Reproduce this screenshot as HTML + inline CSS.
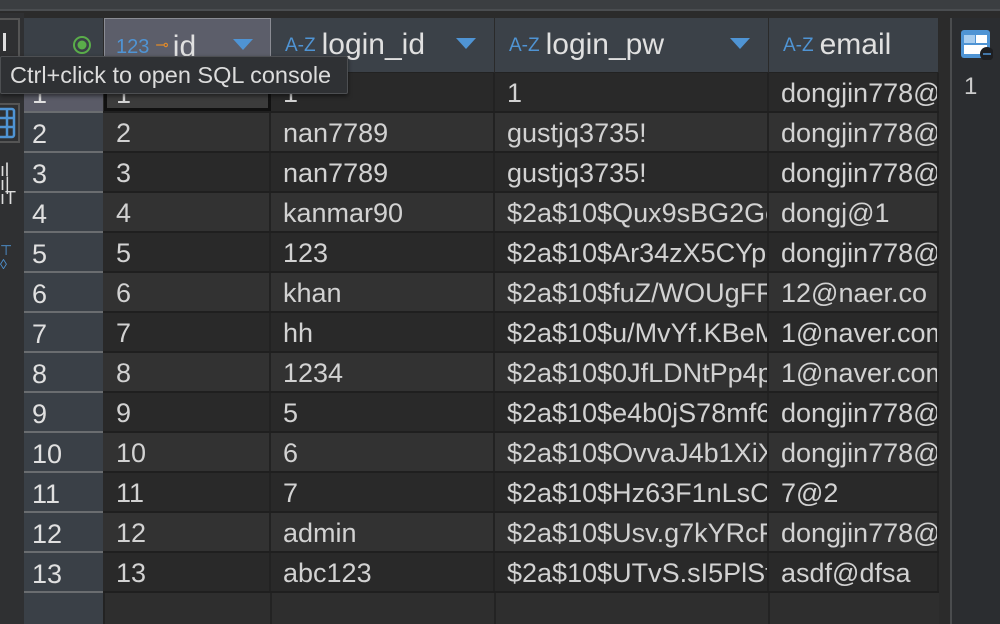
<!DOCTYPE html>
<html><head><meta charset="utf-8"><style>
*{margin:0;padding:0;box-sizing:border-box}
body{width:1000px;height:624px;overflow:hidden;background:#2b2b2b;font-family:"Liberation Sans",sans-serif;color:#d2d2d2;position:relative}
.top{position:absolute;left:0;top:0;width:1000px;height:11px;background:#3b3e41;border-bottom:2px solid #4a4d50}
.left{position:absolute;left:0;top:13px;width:24px;height:611px;background:#2f3032}
.grid{position:absolute;left:24px;top:18px;width:915px;height:606px;background:#2e2e2e}
.hdr{position:absolute;top:0;height:55px;background:#3b4148;border-right:1px solid #2a2a2a;border-bottom:1px solid #222;font-size:30px;line-height:53px;color:#e0e0e0;white-space:nowrap}
.az{color:#4f94d4;font-size:19px;margin:0 6px 0 14px;vertical-align:3px}
.tri{position:absolute;top:20px;width:0;height:0;border-left:10px solid transparent;border-right:10px solid transparent;border-top:11px solid #4f94d4}
.row{position:absolute;left:0;width:915px;height:40px;border-bottom:2px solid #1f1f1f}
.c{position:absolute;top:0;height:38px;line-height:40px;font-size:27px;padding-left:12px;white-space:nowrap;overflow:hidden;border-right:2px solid #222}
.rn{position:absolute;left:0;top:0;width:79px;height:38px;background:#3a4047;line-height:42px;font-size:27px;padding-left:8px;color:#e0e0e0}
.rnb{position:absolute;left:0;bottom:-2px;width:79px;height:2px;background:#6a6d70}
.right{position:absolute;left:950px;top:18px;width:50px;height:606px;background:#2b2d30;border-left:2px solid #4a4c4e}
.tip{position:absolute;left:0;top:56px;width:348px;height:38px;background:#2f3134;border:1px solid #4d4f52;border-radius:2px;font-size:23.5px;line-height:36px;padding-left:9px;color:#dcdcdc;box-shadow:0 2px 4px rgba(0,0,0,.5);white-space:nowrap}
</style></head><body>
<div class="top"></div>
<div class="left">
 <div style="position:absolute;left:0;top:5px;width:20px;height:45px;border:2px solid #555;border-left:0"></div>
 <div style="position:absolute;left:3px;top:20px;width:3px;height:18px;background:#ddd"></div>
 <div style="position:absolute;left:0;top:90px;width:20px;height:40px;border:2px solid #555;border-left:0"></div>
 <svg style="position:absolute;left:0;top:94px" width="16" height="32"><g stroke="#4f94d4" stroke-width="2.5" fill="none"><rect x="-2" y="2" width="16" height="28" rx="2"/><line x1="7" y1="2" x2="7" y2="30"/><line x1="-2" y1="11" x2="14" y2="11"/><line x1="-2" y1="20" x2="14" y2="20"/></g></svg>
 <div style="position:absolute;left:0;top:150px;font-size:18px;line-height:14px;color:#ddd">ıl<br>ı|<br>ıT</div>
 <div style="position:absolute;left:0;top:230px;font-size:14px;color:#4f94d4;line-height:14px">⊤<br>◊</div>
</div>
<div class="grid">
 <div class="hdr" style="left:0;width:80px;background:#3a4047"><svg style="position:absolute;left:48px;top:17px" width="20" height="20"><circle cx="10" cy="10" r="8" stroke="#5aad4a" stroke-width="2" fill="none"/><circle cx="10" cy="10" r="4.5" fill="#5aad4a"/></svg></div>
 <div class="hdr" style="left:80px;width:167px;background:#5c5e6a;border:1px solid #8a8c94"><span class="az" style="font-size:20px;margin-left:11px">123</span><span style="color:#e08a2a;font-size:16px;margin-right:4px;vertical-align:6px">⊸</span>id<div class="tri" style="left:128px"></div></div>
 <div class="hdr" style="left:247px;width:224px"><span class="az">A-Z</span>login_id<div class="tri" style="left:185px"></div></div>
 <div class="hdr" style="left:471px;width:274px"><span class="az">A-Z</span>login_pw<div class="tri" style="left:235px"></div></div>
 <div class="hdr" style="left:745px;width:170px"><span class="az">A-Z</span>email</div>
 <div id="rows"></div>
 <div style="position:absolute;left:0;top:575px;width:79px;height:31px;background:#3a4047"></div>
 <div style="position:absolute;left:246px;top:575px;width:2px;height:31px;background:#232323"></div>
 <div style="position:absolute;left:470px;top:575px;width:2px;height:31px;background:#232323"></div>
 <div style="position:absolute;left:744px;top:575px;width:2px;height:31px;background:#232323"></div>
 <div style="position:absolute;left:79px;top:575px;width:2px;height:31px;background:#232323"></div>
</div>
<div class="right">
 <svg style="position:absolute;left:9px;top:10px" width="32" height="32"><rect x="0" y="2" width="29" height="28" rx="3" fill="#4f94d4"/><rect x="3" y="7" width="11" height="8" fill="#a8cdef"/><rect x="15" y="7" width="11" height="8" fill="#fff"/><rect x="3" y="17" width="23" height="9" fill="#fff"/><circle cx="26" cy="26" r="7" fill="#1e1f22"/><line x1="22" y1="26" x2="30" y2="26" stroke="#4f94d4" stroke-width="1.5"/></svg>
 <div style="position:absolute;left:12px;top:55px;font-size:24px;color:#ccc">1</div>
</div>
<script>
var d=[["1","1","1","dongjin778@"],["2","nan7789","gustjq3735!","dongjin778@"],["3","nan7789","gustjq3735!","dongjin778@"],["4","kanmar90","$2a$10$Qux9sBG2Gc","dongj@1"],["5","123","$2a$10$Ar34zX5CYp","dongjin778@"],["6","khan","$2a$10$fuZ/WOUgFR","12@naer.co"],["7","hh","$2a$10$u/MvYf.KBeM","1@naver.com"],["8","1234","$2a$10$0JfLDNtPp4p","1@naver.com"],["9","5","$2a$10$e4b0jS78mf6","dongjin778@"],["10","6","$2a$10$OvvaJ4b1XiX","dongjin778@"],["11","7","$2a$10$Hz63F1nLsCc","7@2"],["12","admin","$2a$10$Usv.g7kYRcR","dongjin778@"],["13","abc123","$2a$10$UTvS.sI5PlSt","asdf@dfsa"]];
var h="";d.forEach(function(r,i){var bg=(i%2==1)?"#323232":"#292929";var top=55+i*40;
h+='<div class="row" style="top:'+top+'px;background:'+bg+'"><div class="rn" style="'+(i==0?'background:#5a5b67':'')+'">'+(i+1)+'<div class="rnb"></div></div>';
var L=[80,247,471,745],W=[167,224,274,170];
for(var j=0;j<4;j++){var st='left:'+L[j]+'px;width:'+W[j]+'px;';if(i==0&&j==0)st+='background:#3c3c3c;border:3px solid #111;line-height:36px;padding-left:9px;';h+='<div class="c" style="'+st+'">'+r[j]+'</div>';}
h+='</div>';});
document.getElementById("rows").innerHTML=h;
</script>
<div class="tip">Ctrl+click to open SQL console</div>
</body></html>
